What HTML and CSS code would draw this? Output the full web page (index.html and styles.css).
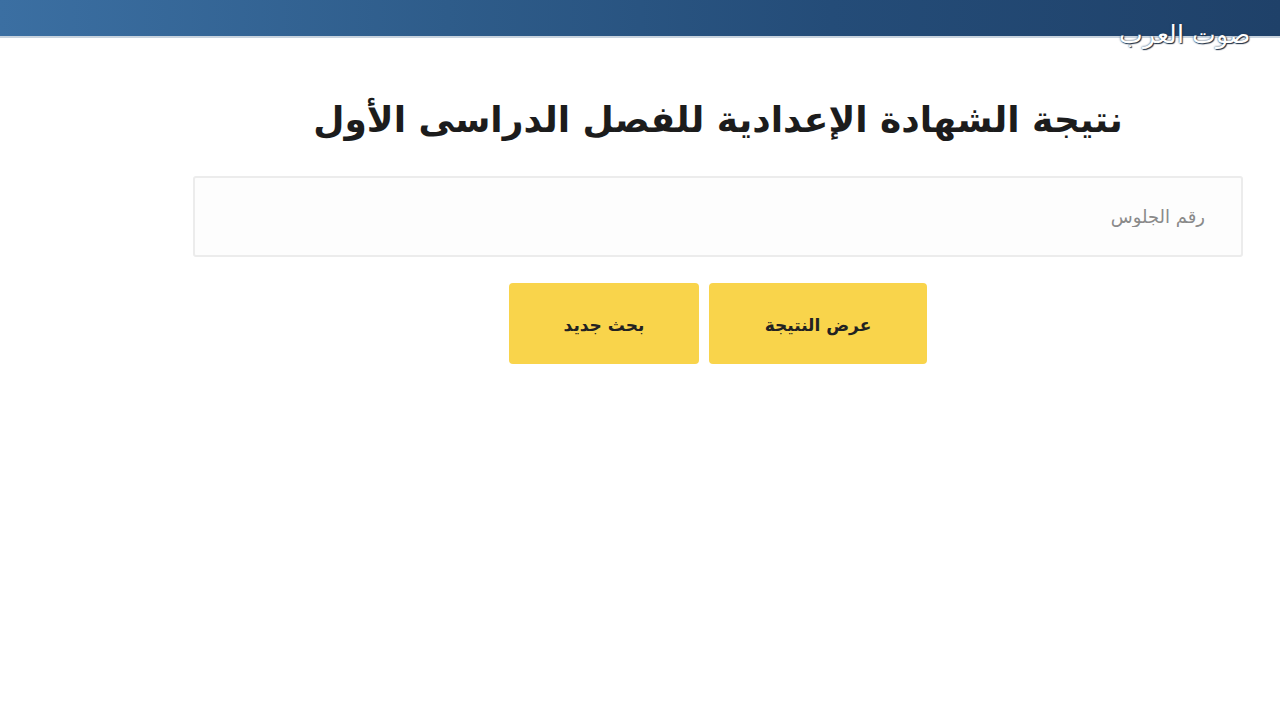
FILE: index.html
```html
<!DOCTYPE html>
<html lang="ar" dir="rtl">
<head>
    <meta charset="UTF-8">
    <meta name="viewport" content="width=device-width, initial-scale=1.0">
    <title>نتيجة الشهادة الإعدادية</title>
    <link rel="stylesheet" href="styles.css">
</head>
<body>
    <header class="top-bar"></header>
    <div class="watermark">صوت العرب</div>

    <main class="container">
        <h1>نتيجة الشهادة الإعدادية للفصل الدراسى الأول</h1>
        <input type="text" class="seat-input" placeholder="رقم الجلوس">
        <div class="actions">
            <button class="btn">عرض النتيجة</button>
            <button class="btn btn-new">بحث جديد</button>
        </div>
    </main>
</body>
</html>
```

FILE: styles.css
```css
/* General Styles */
body {
    margin: 0;
    font-family: 'DejaVu Sans', 'Noto Sans', sans-serif;
    background: #ffffff;
    height: 720px;
    overflow: hidden;
    position: relative;
}

.top-bar {
    height: 36px;
    background: linear-gradient(90deg, #3b6fa2 0%, #2e5c8a 35%, #244c78 65%, #1f4169 100%);
    border-bottom: 2px solid #c8d3de;
}

.watermark {
    position: absolute;
    top: 20px;
    right: 30px;
    font-size: 25px;
    font-weight: 300;
    color: #ffffff;
    text-shadow: 0 0 2px #1d2f45, 1px 1px 1px #1d2f45;
    letter-spacing: 1px;
}

.container {
    width: 1050px;
    margin: 0 37px 0 auto;
    padding-top: 60px;
    display: flex;
    flex-direction: column;
    align-items: center;
}

h1 {
    margin: 0 0 34px;
    font-size: 36px;
    font-weight: bold;
    color: #1c1c1c;
    line-height: 44px;
}

.seat-input {
    box-sizing: border-box;
    width: 1050px;
    height: 81px;
    border: 2px solid #ececec;
    border-radius: 3px;
    background: #fdfdfd;
    padding: 0 36px;
    font-family: inherit;
    font-size: 18px;
    color: #333;
    outline: none;
}

.seat-input::placeholder {
    color: #8a8a8a;
}

/* Button Styles */
.actions {
    display: flex;
    gap: 10px;
    margin-top: 26px;
}

.btn {
    width: 218px;
    height: 81px;
    padding-top: 4px;
    background: #f9d44b;
    border: none;
    border-radius: 4px;
    font-family: inherit;
    font-size: 17px;
    font-weight: bold;
    color: #222;
    cursor: pointer;
}

.btn-new {
    width: 190px;
}
```
